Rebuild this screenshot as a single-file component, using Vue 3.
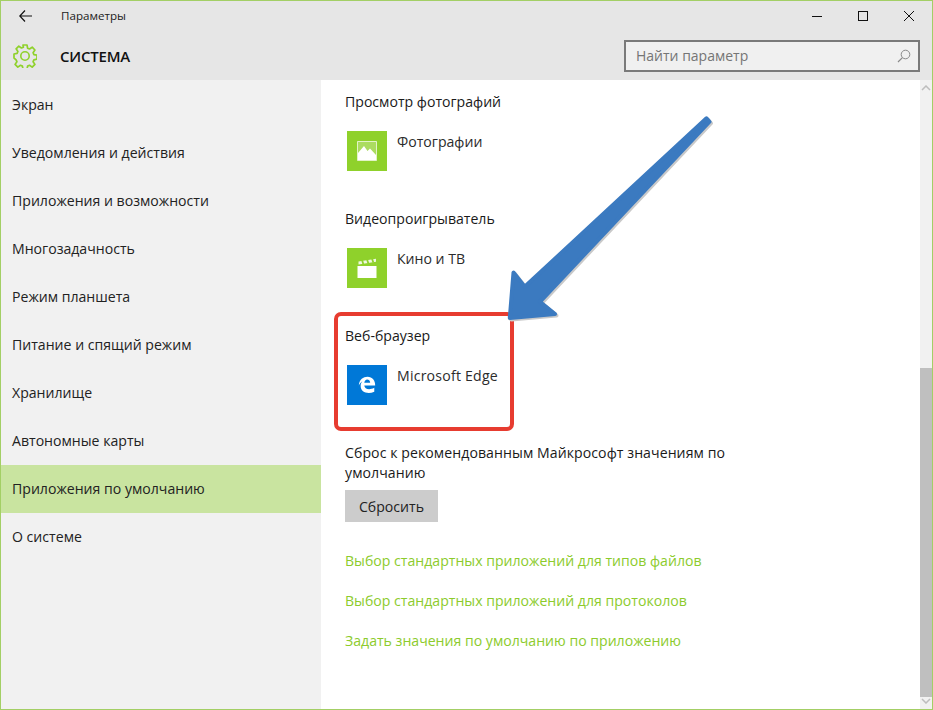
<script setup>
const navItems = [
  'Экран',
  'Уведомления и действия',
  'Приложения и возможности',
  'Многозадачность',
  'Режим планшета',
  'Питание и спящий режим',
  'Хранилище',
  'Автономные карты',
  'Приложения по умолчанию',
  'О системе'
]
const links = [
  'Выбор стандартных приложений для типов файлов',
  'Выбор стандартных приложений для протоколов',
  'Задать значения по умолчанию по приложению'
]
</script>

<template>
  <div class="window">
    <header class="header">
      <div class="titlebar">
        <svg class="back" width="13" height="12" viewBox="0 0 13 12">
          <path d="M6 .5.8 6 6 11.500M.8 6H13" fill="none" stroke="#111" stroke-width="1.200" />
        </svg>
        <span class="title">Параметры</span>
        <div class="winbtns">
          <svg width="10" height="10" viewBox="0 0 10 10"><path d="M0 5.500h10" stroke="#111" stroke-width="1" /></svg>
          <svg width="10" height="10" viewBox="0 0 10 10"><rect x=".5" y=".5" width="9" height="9" fill="none" stroke="#111" /></svg>
          <svg width="10" height="10" viewBox="0 0 10 10"><path d="M0 0l10 10M10 0 0 10" stroke="#111" stroke-width="1" /></svg>
        </div>
      </div>
      <div class="subbar">
        <svg class="gear" width="24" height="24" viewBox="0 0 24 24">
          <path d="M10 1h4l.6 3.200 1.900.8 2.700-1.800 2.700 2.800-1.800 2.700.8 1.900 3.100.6v4l-3.100.6-.8 1.900 1.800 2.700-2.700 2.700-2.700-1.800-1.900.8-.6 3.100h-4l-.6-3.100-1.900-.8-2.700 1.800-2.700-2.700 1.800-2.700-.8-1.900L1 14v-4l3.100-.6.8-1.900L3.100 4.800 5.800 2.200l2.700 1.800 1.900-.8z" fill="none" stroke="#8fd12b" stroke-width="1.700" stroke-linejoin="round" />
          <circle cx="12" cy="12" r="4.200" fill="none" stroke="#8fd12b" stroke-width="1.600" />
        </svg>
        <span class="section">СИСТЕМА</span>
        <div class="search">
          <span class="search-text">Найти параметр</span>
          <svg width="14" height="14" viewBox="0 0 14 14">
            <circle cx="8.500" cy="5.500" r="4.300" fill="none" stroke="#8a8a8a" stroke-width="1" />
            <path d="M5.400 8.600 1 13" stroke="#8a8a8a" stroke-width="1.200" />
          </svg>
        </div>
      </div>
    </header>

    <div class="body">
      <nav class="nav">
        <div
          v-for="(item, i) in navItems"
          :key="item"
          class="nav-item"
          :class="{ active: i === 8 }"
        >{{ item }}</div>
      </nav>

      <main class="content">
        <section class="group">
          <h3>Просмотр фотографий</h3>
          <div class="app">
            <div class="tile lime">
              <svg width="20" height="20" viewBox="0 0 20 20">
                <path d="M.5.500h19v19H.5z" fill="#fff" fill-opacity=".25" stroke="#fff" stroke-opacity=".7" />
                <path d="M1 19v-7l6-7 3.500 5 2.500-2.500 6 6.500v5z" fill="#fff" />
              </svg>
            </div>
            <span class="app-name">Фотографии</span>
          </div>
        </section>

        <section class="group">
          <h3>Видеопроигрыватель</h3>
          <div class="app">
            <div class="tile lime">
              <svg width="20" height="20" viewBox="0 0 20 20">
                <path d="M.5 8h19v12H.5z" fill="#fff" />
                <path d="M1.500 3.500 19 .8v3L1.500 6.500z" fill="#fff" fill-opacity=".85" />
                <path d="M5 2 6.300 6M10 1.300 11.300 5.300M15 .5 16.300 4.500" stroke="#8fd12b" stroke-width="1.800" />
              </svg>
            </div>
            <span class="app-name">Кино и ТВ</span>
          </div>
        </section>

        <section class="group">
          <h3>Веб-браузер</h3>
          <div class="app">
            <div class="tile blue">
              <svg width="20" height="20" viewBox="0 0 22 22">
                <path d="M2 11.500C2.500 5 7 2 11.500 2c5.500 0 8.500 4 8.500 9.500H8c.3 4 5.500 5.500 11 2.500v4.300c-7 3.200-15 .7-15-6.300 0-2 .8-3.700 2-5C4.500 8 3 9.500 2 11.500zM8 8.500h6.500C14.300 5.800 12.800 5 11.300 5 9.500 5 8.300 6.500 8 8.500z" fill="#fff" fill-rule="evenodd" />
              </svg>
            </div>
            <span class="app-name latin">Microsoft Edge</span>
          </div>
        </section>

        <section class="reset">
          <p>Сброс к рекомендованным Майкрософт значениям по умолчанию</p>
          <button type="button">Сбросить</button>
        </section>

        <div class="links">
          <a v-for="l in links" :key="l">{{ l }}</a>
        </div>
      </main>

      <aside class="scrollbar">
        <svg width="10" height="6" viewBox="0 0 10 6"><path d="M1 5l4-4 4 4" fill="none" stroke="#bdbdbd" stroke-width="1.500" /></svg>
        <div class="track"><div class="thumb"></div></div>
        <svg width="10" height="6" viewBox="0 0 10 6"><path d="M1 1l4 4 4-4" fill="none" stroke="#bdbdbd" stroke-width="1.500" /></svg>
      </aside>
    </div>

    <div class="redbox"></div>
    <svg class="arrow" width="933" height="710" viewBox="0 0 933 710">
      <path class="arrow-shadow" d="M706.500 118.300 524.700 286.800 513.500 272.500 509.800 318 555 314 539.900 301.800 709.500 121.700z" transform="translate(1.500 1.500)" />
      <path class="arrow-main" d="M706.500 118.300 524.700 286.800 513.500 272.500 509.800 318 555 314 539.900 301.800 709.500 121.700z" />
    </svg>
  </div>
</template>

<style>
html, body { margin: 0; padding: 0; }
</style>

<style scoped>
.window {
  position: relative;
  width: 933px;
  height: 710px;
  box-sizing: border-box;
  border: 1px solid #a3cf65;
  display: flex;
  flex-direction: column;
  overflow: hidden;
  background: #fff;
  font-family: "Open Sans", "Noto Sans", sans-serif;
  font-size: 14.1px;
  color: #1a1a1a;
}
.header {
  height: 79px;
  background: #e6e6e6;
  flex: none;
}
.titlebar {
  height: 31px;
  display: flex;
  align-items: center;
  padding-left: 18px;
}
.back { margin-right: 29px; margin-top: -1px; }
.title { font-size: 11.6px; color: #222; margin-top: -2px; }
.winbtns {
  margin-left: auto;
  display: flex;
  gap: 36px;
  padding-right: 18px;
  align-items: center;
  margin-top: -2px;
}
.subbar {
  height: 48px;
  display: flex;
  align-items: center;
  padding-left: 12px;
  padding-right: 12px;
}
.gear { margin-right: 23px; }
.section { font-size: 15px; font-weight: 600; color: #111; letter-spacing: -.2px; }
.search {
  margin-left: auto;
  width: 296px;
  height: 32px;
  box-sizing: border-box;
  border: 2px solid #7a7a7a;
  background: #f0f0f0;
  display: flex;
  align-items: center;
  justify-content: space-between;
  padding: 0 7px 0 10px;
  font-size: 14px;
  color: #757575;
}
.search-text { padding-bottom: 2px; }
.body {
  flex: 1;
  display: flex;
  min-height: 0;
}
.nav {
  width: 320px;
  flex: none;
  background: #f1f1f1;
  padding-top: 1px;
}
.nav-item {
  height: 48px;
  box-sizing: border-box;
  padding-bottom: 2px;
  display: flex;
  align-items: center;
  padding-left: 11px;
  color: #222;
}
.nav-item.active { background: #c9e4a0; }
.content {
  flex: 1;
  padding: 12px 0 0 24px;
  min-width: 0;
}
.group { height: 117px; }
h3 {
  margin: 0;
  height: 20px;
  line-height: 20px;
  font-size: inherit;
  font-weight: 400;
  color: #1a1a1a;
}
.app {
  display: flex;
  margin: 19px 0 0 2px;
  gap: 10px;
  color: #2b2b2b;
  line-height: 18px;
}
.app-name { padding-top: 2px; }
.latin { letter-spacing: .22px; }
.tile {
  width: 40px;
  height: 40px;
  display: flex;
  align-items: center;
  justify-content: center;
}
.lime { background: #8fd12b; }
.blue { background: #0078d7; }
.reset { width: 400px; }
.reset p {
  margin: 0;
  line-height: 20px;
  letter-spacing: .07px;
  color: #1a1a1a;
}
.reset button {
  display: block;
  margin-top: 7px;
  width: 93px;
  height: 32px;
  border: none;
  background: #cccccc;
  font: inherit;
  color: #222;
  padding: 0;
}
.links {
  display: flex;
  flex-direction: column;
  margin-top: 29px;
  gap: 20px;
}
.links a {
  line-height: 20px;
  color: #8ccb2c;
}
.scrollbar {
  width: 12px;
  flex: none;
  background: #f1f1f1;
  display: flex;
  flex-direction: column;
  align-items: center;
  justify-content: space-between;
  padding: 5px 0 5px;
  box-sizing: border-box;
}
.track {
  flex: 1;
  width: 100%;
  display: flex;
  flex-direction: column;
  justify-content: flex-end;
  margin: 6px 0 1px;
}
.thumb {
  width: 100%;
  height: 329px;
  background: #bfbfbf;
}
.redbox {
  position: absolute;
  left: 332.5px;
  top: 311px;
  width: 180px;
  height: 119px;
  box-sizing: border-box;
  border: 4px solid #e73c30;
  border-radius: 7px;
}
.arrow {
  position: absolute;
  left: -1px;
  top: -1px;
  pointer-events: none;
}
.arrow-main, .arrow-shadow {
  stroke-linejoin: round;
  stroke-width: 4;
}
.arrow-main { fill: #3b7ac0; stroke: #3b7ac0; }
.arrow-shadow { fill: #c9c9c9; stroke: #c9c9c9; }
</style>
